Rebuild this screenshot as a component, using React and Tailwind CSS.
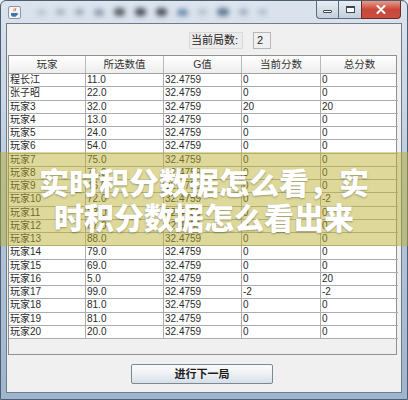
import React from "react";

const rows = [
  ["程长江", "11.0", "32.4759", "0", "0"],
  ["张子昭", "22.0", "32.4759", "0", "0"],
  ["玩家3", "32.0", "32.4759", "20", "20"],
  ["玩家4", "13.0", "32.4759", "0", "0"],
  ["玩家5", "24.0", "32.4759", "0", "0"],
  ["玩家6", "54.0", "32.4759", "0", "0"],
  ["玩家7", "75.0", "32.4759", "0", "0"],
  ["玩家8", "71.0", "32.4759", "0", "0"],
  ["玩家9", "46.0", "32.4759", "0", "0"],
  ["玩家10", "72.0", "32.4759", "0", "-2"],
  ["玩家11", "23.0", "32.4759", "0", "0"],
  ["玩家12", "67.0", "32.4759", "0", "0"],
  ["玩家13", "88.0", "32.4759", "0", "0"],
  ["玩家14", "79.0", "32.4759", "0", "0"],
  ["玩家15", "69.0", "32.4759", "0", "0"],
  ["玩家16", "5.0", "32.4759", "0", "20"],
  ["玩家17", "99.0", "32.4759", "-2", "-2"],
  ["玩家18", "81.0", "32.4759", "0", "0"],
  ["玩家19", "81.0", "32.4759", "0", "0"],
  ["玩家20", "20.0", "32.4759", "0", "0"],
];

const headers = ["玩家", "所选数值", "G值", "当前分数", "总分数"];

const font = { fontFamily: '"Liberation Sans", "Noto Sans CJK SC", sans-serif' };

function JavaIcon() {
  return (
    <svg width="13" height="13" viewBox="0 0 13 13">
      <rect x="0.5" y="0.5" width="12" height="12" rx="1.5" fill="#f4f4f4" stroke="#8a96a3" />
      <path d="M6 2.5c1 1-1 1.5 0 3M7.5 2c1 1-1 1.5 0 3" stroke="#e0592a" strokeWidth="0.9" fill="none" />
      <path d="M3 7h6v1.5c0 1.5-1.2 2.3-3 2.3S3 10 3 8.5z" fill="#3f73b5" />
      <path d="M9 7.3c1.3 0 1.3 1.6 0 1.6" stroke="#3f73b5" strokeWidth="0.8" fill="none" />
    </svg>
  );
}

function TitleBar() {
  return (
    <div className="h-[22px] flex items-start relative">
      <div className="mt-[5px] ml-[7px]">
        <JavaIcon />
      </div>
      {/* blurred caption */}
      <div className="flex items-center gap-[10px] mt-[7px] ml-[16px] blur-[2.5px]">
        <span className="w-[9px] h-[5px] rounded-full bg-[#b3c0ce]" />
        <span className="w-[9px] h-[6px] rounded-full bg-[#a3b1c0]" />
        <span className="w-[9px] h-[6px] rounded-full bg-[#99a8b8]" />
        <span className="w-[10px] h-[7px] rounded-full bg-[#8e9daf]" />
        <span className="w-[11px] h-[8px] rounded-full bg-[#58606a]" />
        <span className="w-[11px] h-[8px] rounded-full bg-[#4c535b]" />
        <span className="w-[11px] h-[8px] rounded-full bg-[#4c535b]" />
        <span className="w-[11px] h-[7px] rounded-full bg-[#6f8eae]" />
        <span className="w-[9px] h-[6px] rounded-full bg-[#b0c0d0]" />
        <span className="w-[12px] h-[8px] rounded-full bg-[#627b95]" />
        <span className="w-[9px] h-[6px] rounded-full bg-[#9aadc1]" />
        <span className="w-[9px] h-[6px] rounded-full bg-[#aebdcd]" />
      </div>
      <div className="ml-auto mr-[6px] flex h-[18px]">
        <div className="w-[23px] h-full border border-[#5c6b7c] border-t-0 rounded-bl-[4px] bg-gradient-to-b from-[#e9eef4] to-[#c3cfdc] flex items-center justify-center">
          <span className="w-[9px] h-[3px] border border-[#3a4654] bg-white rounded-[1px] mt-[3px]" />
        </div>
        <div className="w-[22px] h-full border-b border-[#5c6b7c] bg-gradient-to-b from-[#e9eef4] to-[#c3cfdc] flex items-center justify-center">
          <span className="w-[9px] h-[7px] border border-[#3a4654] border-t-2 bg-white" />
        </div>
        <div className="w-[40px] h-full border border-[#6b2a22] border-t-0 rounded-br-[4px] bg-gradient-to-b from-[#e59a8c] via-[#c8473a] to-[#c8503f] flex items-center justify-center">
          <svg width="10" height="9" viewBox="0 0 10 9">
            <path d="M1.5 1l7 7M8.5 1l-7 7" stroke="#fff" strokeWidth="2" strokeLinecap="round" />
          </svg>
        </div>
      </div>
    </div>
  );
}

function Table() {
  return (
    <div className="ml-px mr-[4px] h-[300px] border border-[#8d9196] bg-[#f0f0f0] flex flex-col" style={font}>
      <div className="grid grid-cols-[77px_78px_78px_79px_77px] h-[18px] bg-gradient-to-b from-white to-[#eeeeee] border-b border-[#a3a3a3]">
        {headers.map((h, i) => (
          <div
            key={h}
            className={`flex items-center justify-center text-[10.5px] text-[#333] ${i < 4 ? "border-r border-[#b9b9b9]" : ""}`}
          >
            {h}
          </div>
        ))}
      </div>
      {rows.map((r) => (
        <div key={r[0]} className="grid grid-cols-[77px_78px_78px_79px_77px] h-[13.25px] bg-white">
          {r.map((c, i) => (
            <div
              key={i}
              className={`flex items-center pl-px text-[10px] leading-none text-[#2a2a2a] border-b border-[#a9adb2] ${i < 4 ? "border-r" : ""}`}
            >
              {c}
            </div>
          ))}
        </div>
      ))}
    </div>
  );
}

export default function App() {
  return (
    <div className="relative w-[408px] h-[400px] overflow-hidden bg-[#e8edf2]">
      <div className="w-full h-full rounded-t-[6px] border border-[#4c5e72] bg-gradient-to-b from-[#dce4ee] via-[#b6c7da] to-[#9fb5cd] flex flex-col">
        <TitleBar />
        <div className="ml-[5px] mr-[5px] flex-1 mb-[6px] bg-[#f0f0f0] border border-[#6f7c8a] flex flex-col" style={font}>
          <div className="h-[31px] flex items-center pl-[182px] pt-px">
            <div className="h-[17px] w-[54px] border border-[#dadada] bg-[#ececec] flex items-center pl-[1px] text-[11px] text-[#222]">
              当前局数:
            </div>
            <div className="ml-[10px] h-[17px] w-[18px] border border-[#b7b7b7] bg-[#f0f0f0] flex items-center pl-[3px] text-[11px] text-[#222]">
              2
            </div>
          </div>
          <Table />
          <div className="flex justify-center pt-[9px]">
            <button className="w-[142px] h-[20px] ml-[-4px] rounded-[2px] border border-[#7b8896] bg-gradient-to-b from-[#fbfbfb] via-[#eef1f4] to-[#d6dee7] text-[11px] font-bold text-[#1c1c1c] flex items-center justify-center">
              进行下一局
            </button>
          </div>
        </div>
      </div>

      {/* headline banner */}
      <div className="absolute left-0 right-0 top-[152px] h-[94px] bg-[rgba(185,175,45,0.48)] flex items-center justify-center">
        <div
          className="w-[340px] text-center text-[30px] leading-[35px] font-black text-white [text-shadow:0_1px_2px_rgba(0,0,0,0.3)]"
          style={{ fontFamily: '"Noto Sans CJK SC", sans-serif' }}
        >
          实时积分数据怎么看，实时积分数据怎么看出来
        </div>
      </div>
    </div>
  );
}
